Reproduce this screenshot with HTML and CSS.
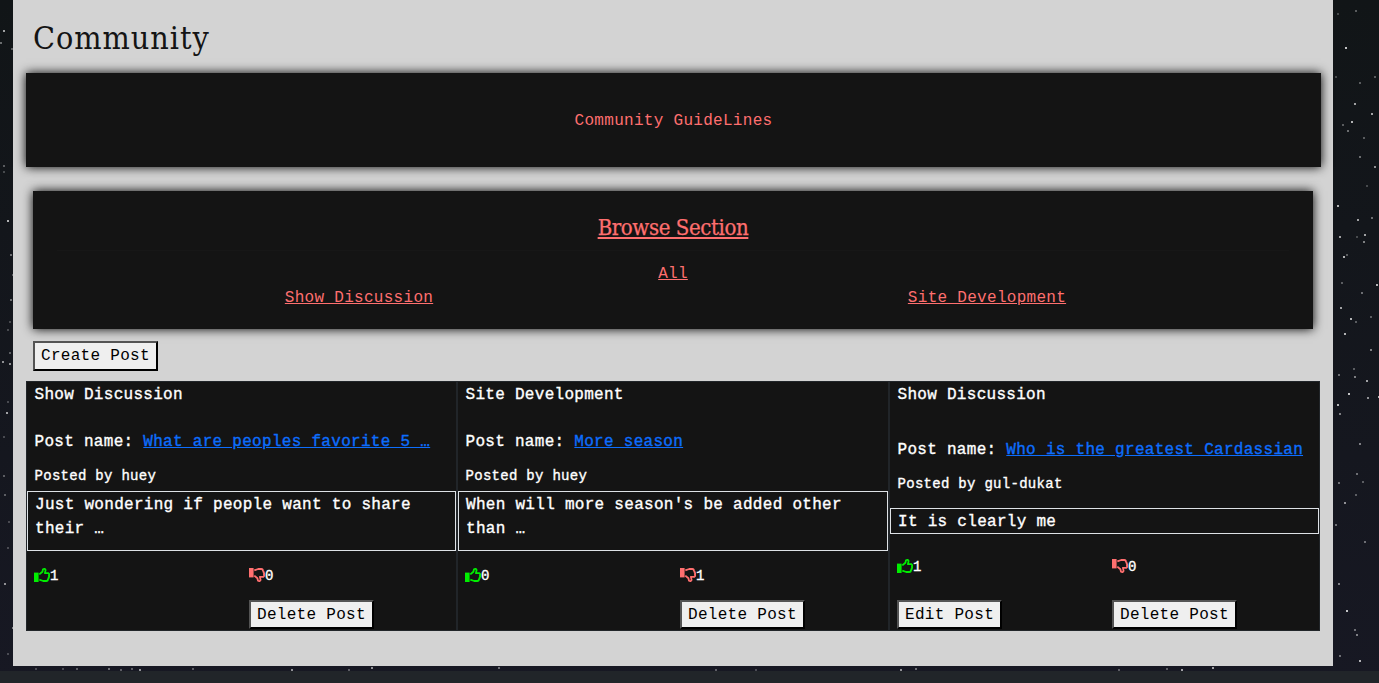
FILE: index.html
```html
<!DOCTYPE html>
<html lang="en">
<head>
<meta charset="utf-8">
<title>Community</title>
<link rel="stylesheet" href="styles.css">
</head>
<body>
<svg class="sky" viewBox="0 0 1379 683" aria-hidden="true"><g id="stars"></g></svg>
<svg class="defs" aria-hidden="true">
<symbol id="thumb" viewBox="0 0 16 14"><path d="M0 4.6h4.6V14H0z" fill="currentColor"/><path d="M5.3 6.4 8.4 3.7 9 1.2q1.9-.9 2.6.9l-.7 3h3.3q1.6.9.7 2.3.6 1.3-.3 2.1.3 1.2-.7 1.8 0 1.7-1.5 1.7H9.2L5.3 11.6" fill="none" stroke="currentColor" stroke-width="1.8" stroke-linejoin="round"/></symbol>
</svg>
<main class="panel">
<h1 class="title">Community</h1>
<section class="box guidelines"><a>Community GuideLines</a></section>
<section class="box browse">
<h2 class="browse-title">Browse Section</h2>
<hr class="rule">
<a class="link">All</a>
<div class="sections"><a class="link">Show Discussion</a><a class="link">Site Development</a></div>
</section>
<button class="btn create">Create Post</button>
<div class="posts">
<article class="post">
<p class="category">Show Discussion</p>
<p class="name">Post name: <a>What are peoples favorite 5 …</a></p>
<p class="author">Posted by huey</p>
<p class="body">Just wondering if people want to share their …</p>
<div class="votes"><span><svg class="thumb up"><use href="#thumb"/></svg>1</span><span><svg class="thumb down"><use href="#thumb"/></svg>0</span></div>
<div class="actions"><span></span><span><button class="btn">Delete Post</button></span></div>
</article>
<article class="post">
<p class="category">Site Development</p>
<p class="name">Post name: <a>More season</a></p>
<p class="author">Posted by huey</p>
<p class="body">When will more season's be added other than …</p>
<div class="votes"><span><svg class="thumb up"><use href="#thumb"/></svg>0</span><span><svg class="thumb down"><use href="#thumb"/></svg>1</span></div>
<div class="actions"><span></span><span><button class="btn">Delete Post</button></span></div>
</article>
<article class="post short">
<p class="category">Show Discussion</p>
<p class="name">Post name: <a>Who is the greatest Cardassian</a></p>
<p class="author">Posted by gul-dukat</p>
<p class="body">It is clearly me</p>
<div class="votes"><span><svg class="thumb up"><use href="#thumb"/></svg>1</span><span><svg class="thumb down"><use href="#thumb"/></svg>0</span></div>
<div class="actions"><span><button class="btn">Edit Post</button></span><span><button class="btn">Delete Post</button></span></div>
</article>
</div>
</main>
<footer class="footer"></footer>
<script src="stars.js"></script>
</body>
</html>
```
FILE: styles.css
```css
* { box-sizing: border-box; }
body { margin: 0; height: 683px; overflow: hidden; background: #14161a; color: #fff; font: 16px/24px "Liberation Mono", monospace; letter-spacing: .29px; }
h1, h2, p { margin: 0; font-weight: 400; }
.sky { position: absolute; inset: 0; width: 1379px; height: 683px; background: linear-gradient(#111517, #171823); }
.defs { position: absolute; width: 0; height: 0; }
.panel { position: relative; width: 1320px; height: 666px; margin-left: 13px; padding: 15px 12px 0 13px; background: #d3d3d3; }
.title { margin-left: 7px; height: 46px; font: 32px/46px "DejaVu Serif Condensed", "DejaVu Serif", serif; color: #141414; letter-spacing: .95px; }
.box { background: #141414; color: #ff6f6f; box-shadow: 0 0 10px #000; text-align: center; }
.guidelines { margin-top: 12px; height: 94px; padding-top: 36px; }
.browse { margin: 24px 8px 0 7px; height: 138px; padding: 21px 24px; }
.browse-title { font: 22px/32px "DejaVu Serif Condensed", "DejaVu Serif", serif; letter-spacing: -.4px; text-decoration: underline; text-decoration-thickness: 2px; text-underline-offset: 2px; -webkit-text-stroke: .25px; }
.rule { height: 1px; margin: 6px 0 11px; border: 0; background: #171717; }
.link { text-decoration: underline; }
.sections { display: grid; grid-template-columns: 1fr 1fr; margin: 0 -12px; }
.btn { height: 29px; padding: 0 6px; border: 2px outset #000; border-radius: 0; background: #efefef; color: #000; font: inherit; font-size: 16px; line-height: 24px; letter-spacing: inherit; white-space: nowrap; }
.create { display: block; height: 30px; margin: 12px 0 10px 7px; }
.posts { display: grid; grid-template-columns: 431px 432px 431px; height: 250px; width: 1294px; background: #141414; }
.post { display: flex; flex-direction: column; border: 1px solid #212529; -webkit-text-stroke: .35px; }
.category, .name, .author { padding-left: 7.5px; white-space: nowrap; }
.category { margin-top: 1px; }
.name { margin-top: 23px; }
.name a { color: #0d6efd; text-decoration: underline; }
.author { margin-top: 10px; font-size: 14px; }
.body { height: 60px; margin-top: 3px; padding: 1px 7px 0; border: 1px solid #dee2e6; }
.votes, .actions { display: grid; grid-template-columns: 215px 1fr; padding-left: 7px; }
.votes { margin-top: 13px; font-size: 14px; }
.votes span { display: flex; align-items: center; }
.thumb { width: 16px; height: 14px; position: relative; top: -1px; }
.up { color: #0e0; }
.down { color: #ff6f6f; transform: scaleY(-1); }
.actions { margin-top: auto; padding-bottom: 1px; -webkit-text-stroke: 0; }
.actions span { display: flex; }
.short .name { margin-top: 31px; }
.short .body { height: 26px; margin-top: 12px; }
.short .votes { margin-top: 21px; }
.footer { position: relative; height: 12px; margin-top: 5px; background: #212529; }
```
FILE: stars.js
```js
// x, y, brightness of each star
const stars = [[3,30,.8],[0,42,.5],[11,48,.4],[3,165,.4],[3,171,.3],[7,220,.9],[10,254,.5],[12,274,.4],[10,299,.5],[9,321,.3],[7,329,.3],[9,352,.4],[2,361,.7],[9,363,.7],[7,401,.3],[6,412,.8],[3,436,.3],[3,475,.4],[4,494,.4],[8,521,.3],[7,547,.3],[4,583,.7],[12,627,.6],[7,653,.3],[1337,13,.3],[1355,10,.4],[1345,47,1],[1335,76,.3],[1359,82,.4],[1374,76,.4],[1354,103,.8],[1371,113,.8],[1351,121,.9],[1342,124,.4],[1347,130,.5],[1363,137,.4],[1359,156,.5],[1374,166,.7],[1366,185,.3],[1337,205,.9],[1357,219,.8],[1371,217,.5],[1339,236,.8],[1364,234,.8],[1363,241,.6],[1356,236,.3],[1343,256,.9],[1346,254,.4],[1341,282,.4],[1376,284,.9],[1361,292,.5],[1340,307,.8],[1350,318,.9],[1355,321,.4],[1370,316,.4],[1344,333,.9],[1370,349,.6],[1338,374,.5],[1354,376,.6],[1353,368,.4],[1366,380,.8],[1348,393,1],[1367,397,.7],[1378,396,.9],[1337,404,.9],[1339,413,.6],[1359,443,.6],[1356,473,.5],[1338,482,.5],[1362,481,.4],[1355,494,.4],[1344,502,.7],[1335,524,.5],[1364,541,.5],[1338,583,.6],[1346,610,1],[1354,629,.5],[1356,634,.6],[1339,655,.5],[1359,660,.9],[35,668,.3],[62,668,.3],[76,668,.4],[108,668,.5],[120,669,.4],[131,668,.4],[139,669,.7],[192,668,.4],[291,669,.7],[348,669,.4],[371,667,.7],[498,667,.5],[715,669,.4],[755,669,.3],[900,669,.7],[915,668,.5],[1118,669,.4],[1166,668,.4],[1181,669,.8],[1212,667,.8]];
const group = document.getElementById("stars");
for (const [x, y, a] of stars) {
  const r = document.createElementNS("http://www.w3.org/2000/svg", "rect");
  for (const [k, v] of Object.entries({ x, y, width: 2, height: 2, fill: "#fff", opacity: a * 0.75 })) r.setAttribute(k, v);
  group.append(r);
}
```
